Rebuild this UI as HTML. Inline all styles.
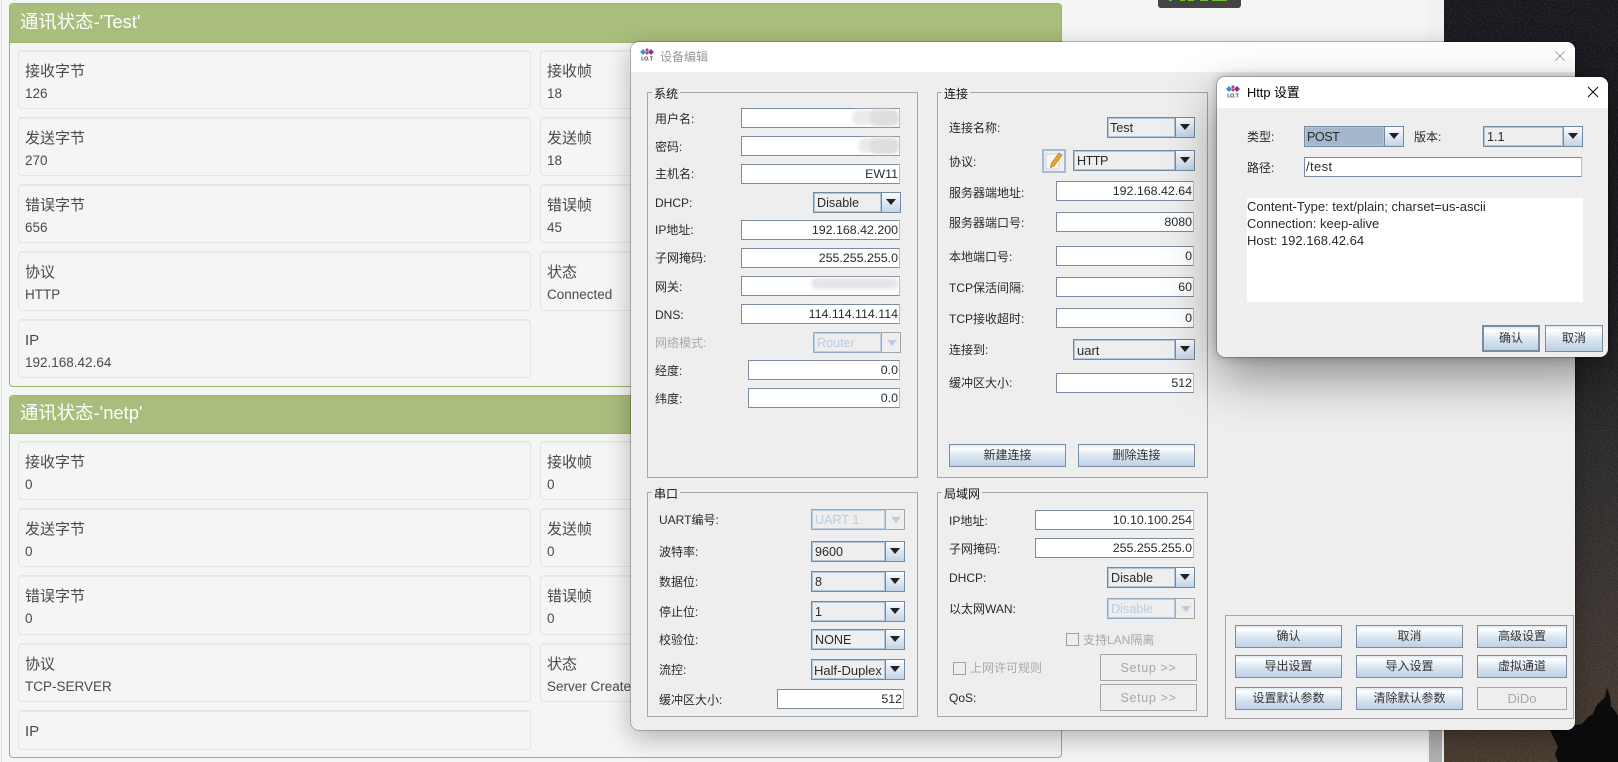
<!DOCTYPE html>
<html lang="zh-CN">
<head>
<meta charset="utf-8">
<title>设备编辑</title>
<style>
html,body{margin:0;padding:0;background:#f4f6f6}
#r{position:relative;width:1618px;height:762px;overflow:hidden;background:#f4f6f6;font-family:"Liberation Sans","Noto Sans CJK SC",sans-serif;color:#222}
#r div,#r span,#r svg{position:absolute}
.panel{box-sizing:border-box;left:9px;width:1053px;border:1px solid #9db36e;border-radius:4px;background:#f4f6f6}
.ph{left:0;right:0;top:0;background:#a9bd7d;border-bottom:1px solid #9db36e;border-radius:3px 3px 0 0}
.pt{left:10px;font-size:18.4px;line-height:24px;color:#fff;white-space:nowrap}
.card{box-sizing:border-box;height:59px;left:18px;width:513px;background:#f5f5f5;border:1px solid #e4e4e4;border-radius:4px;box-shadow:inset 0 1px 1px rgba(0,0,0,.05)}
.c2{left:540px}
.l{left:6px;top:11px;font-size:15px;line-height:20px;color:#4a4a4a;white-space:nowrap}
.v{left:6px;top:34px;font-size:13.5px;line-height:18px;color:#4a4a4a;white-space:nowrap}
.dlg{box-sizing:border-box;background:#eee;border-radius:8px;box-shadow:0 0 0 1px rgba(0,0,0,.22),0 8px 26px rgba(0,0,0,.28)}
.tb{left:0;right:0;top:0;background:#fff;border-radius:8px 8px 0 0}
.g{box-sizing:border-box;border:1px solid #a6a6a6}
.t{font-size:12px;line-height:16px;white-space:nowrap;color:#2a2a2a}
.lg{background:#eee;padding:0 2px;font-size:12px;line-height:14px;white-space:nowrap;color:#111}
.dis{color:#a8a8a8}
.i{box-sizing:border-box;height:20px;background:#fff;border:1px solid #7b8b9c;border-right:1px solid #b5bfc9;font-size:12.4px;line-height:18px;text-align:right;padding-right:1px;color:#2a2a2a;white-space:nowrap;overflow:hidden}
.c{box-sizing:border-box;height:21px;border:1px solid #7389a0;background:#eee}
.cv{box-sizing:border-box;left:0;top:0;bottom:0;right:19px;border:1px solid #b0c6dc;padding-left:2px;font-size:12.6px;line-height:19px;color:#2a2a2a;white-space:nowrap;overflow:hidden}
.cb{box-sizing:border-box;right:0;top:0;bottom:0;width:19px;border-left:1px solid #7389a0;background:linear-gradient(#fbfcfe,#c2d4e6)}
.cb:after{content:"";position:absolute;left:4px;top:6px;border-left:5px solid transparent;border-right:5px solid transparent;border-top:6px solid #222}
.c.d{border-color:#8fa9c3}
.c.d .cv{border-color:#bcd0e4;color:#b9cde2}
.c.d .cb{border:1px solid #a6a6a6;border-left-color:#a6a6a6;background:#eee;top:-1px;bottom:-1px;right:-1px;width:20px}
.c.d .cb:after{border-top-color:#b9cde2;left:5px;top:7px}
.bt{box-sizing:border-box;height:23px;border:1px solid #7a8c9e;background:linear-gradient(#dde8f2 0,#fff 16%,#dce7f1 50%,#bdd1e5 100%);font-size:12px;line-height:21px;text-align:center;color:#333;white-space:nowrap}
.bt.off{background:#eee;border-color:#a6a6a6;color:#a8a8a8}
.cbx{box-sizing:border-box;width:13px;height:13px;border:1px solid #98a2ac;background:#eee}
.blur{background:#dedede;filter:blur(1.5px);border-radius:7px}
</style>
</head>
<body>
<div id="r">

<!-- wallpaper -->
<div style="left:1444px;top:0;width:174px;height:762px;background:linear-gradient(#15171d 0,#1c1d21 35%,#2b2a2a 60%,#3a3330 80%,#46392c 100%)"></div>
<svg style="left:1444px;top:0" width="174" height="762" viewBox="0 0 174 762">
<filter id="nz"><feTurbulence type="fractalNoise" baseFrequency=".7" numOctaves="2" seed="4"/><feColorMatrix values="0 0 0 0 1 0 0 0 0 1 0 0 0 0 1 1.4 0 0 0 -.55"/></filter>
<rect width="174" height="762" filter="url(#nz)" opacity=".16"/>
<path fill="#0c0c0c" d="M163 688l3 8 1 10 5 6 2 4v46h-60l-3-8 3-7-8-17 6-2 26-4 6-7 5-3 3-8 4-4 5-5z"/>
</svg>

<!-- scrollbar -->
<div style="left:1427px;top:0;width:17px;height:762px;background:#f1f1f1"></div>
<div style="left:1429px;top:300px;width:13px;height:462px;background:#b0b0b0"></div>

<!-- top tooltip -->
<div style="left:1158px;top:-4px;width:83px;height:12px;background:#444;border-radius:3px"></div>
<div style="left:1169px;top:0;width:3px;height:1px;background:#6ec22a"></div>
<div style="left:1180px;top:0;width:5px;height:1px;background:#6ec22a"></div>
<div style="left:1188px;top:0;width:6px;height:1px;background:#6ec22a"></div>
<div style="left:1200px;top:0;width:8px;height:1px;background:#6ec22a"></div>
<div style="left:1212px;top:0;width:15px;height:1px;background:#6ec22a"></div>

<div style="left:1px;top:0;width:1px;height:762px;background:#dcdcdc"></div>

<!-- panel 1 -->
<div class="panel" style="top:3px;height:384px"><div class="ph" style="height:38px"><div class="pt" style="top:6px">通讯状态-'Test'</div></div></div>
<div class="card" style="top:50px"><div class="l">接收字节</div><div class="v">126</div></div>
<div class="card c2" style="top:50px"><div class="l">接收帧</div><div class="v">18</div></div>
<div class="card" style="top:117px"><div class="l">发送字节</div><div class="v">270</div></div>
<div class="card c2" style="top:117px"><div class="l">发送帧</div><div class="v">18</div></div>
<div class="card" style="top:184px"><div class="l">错误字节</div><div class="v">656</div></div>
<div class="card c2" style="top:184px"><div class="l">错误帧</div><div class="v">45</div></div>
<div class="card" style="top:251px;height:60px"><div class="l">协议</div><div class="v">HTTP</div></div>
<div class="card c2" style="top:251px;height:60px"><div class="l">状态</div><div class="v">Connected</div></div>
<div class="card" style="top:319px"><div class="l">IP</div><div class="v">192.168.42.64</div></div>

<!-- panel 2 -->
<div class="panel" style="top:395px;height:363px"><div class="ph" style="height:37px"><div class="pt" style="top:5px">通讯状态-'netp'</div></div></div>
<div class="card" style="top:441px"><div class="l">接收字节</div><div class="v">0</div></div>
<div class="card c2" style="top:441px"><div class="l">接收帧</div><div class="v">0</div></div>
<div class="card" style="top:508px"><div class="l">发送字节</div><div class="v">0</div></div>
<div class="card c2" style="top:508px"><div class="l">发送帧</div><div class="v">0</div></div>
<div class="card" style="top:575px;height:60px"><div class="l">错误字节</div><div class="v">0</div></div>
<div class="card c2" style="top:575px;height:60px"><div class="l">错误帧</div><div class="v">0</div></div>
<div class="card" style="top:643px"><div class="l">协议</div><div class="v">TCP-SERVER</div></div>
<div class="card c2" style="top:643px"><div class="l">状态</div><div class="v">Server Created</div></div>
<div class="card" style="top:710px;height:40px"><div class="l">IP</div></div>

<!-- main dialog -->
<div class="dlg" style="left:631px;top:42px;width:944px;height:688px"><div class="tb" style="height:30px"></div></div>
<svg style="left:640px;top:48px" width="14" height="14" viewBox="0 0 14 14"><path d="M0 4l3-3 3 3-3 3z" fill="#3a8fd8"/><path d="M8 4l3-3 3 3-3 3z" fill="#7a3a9a"/><path d="M5 2l2-2 2 2-2 2z" fill="#a04a9a"/><path d="M5 5l2-2 2 2-2 2z" fill="#e0434b"/><text x="7" y="12.5" font-size="5.2" font-weight="bold" text-anchor="middle" font-family="Liberation Sans" fill="#333">I.O.T</text></svg>
<div class="t" style="left:660px;top:49px;color:#999">设备编辑</div>
<svg style="left:1554px;top:50px" width="12" height="12" viewBox="0 0 12 12"><path d="M1 1l10 10M11 1L1 11" stroke="#aaa" stroke-width="1" fill="none"/></svg>

<!-- 系统 -->
<div class="g" style="left:647px;top:92px;width:271px;height:386px"></div>
<div class="lg" style="left:652px;top:87px">系统</div>
<div class="t" style="left:655px;top:111px">用户名:</div>
<div class="i" style="left:741px;top:108px;width:159px"></div>
<div class="blur" style="left:852px;top:110px;width:46px;height:15px;background:#ebebeb"></div>
<div class="blur" style="left:870px;top:110px;width:29px;height:16px"></div>
<div class="t" style="left:655px;top:139px">密码:</div>
<div class="i" style="left:741px;top:136px;width:159px"></div>
<div class="blur" style="left:858px;top:138px;width:40px;height:15px;background:#ebebeb"></div>
<div class="blur" style="left:870px;top:138px;width:29px;height:16px"></div>
<div class="t" style="left:655px;top:166px">主机名:</div>
<div class="i" style="left:741px;top:164px;width:159px">EW11</div>
<div class="t" style="left:655px;top:195px">DHCP:</div>
<div class="c" style="left:813px;top:192px;width:88px"><div class="cv">Disable</div><div class="cb"></div></div>
<div class="t" style="left:655px;top:222px">IP地址:</div>
<div class="i" style="left:741px;top:220px;width:159px">192.168.42.200</div>
<div class="t" style="left:655px;top:250px">子网掩码:</div>
<div class="i" style="left:741px;top:248px;width:159px">255.255.255.0</div>
<div class="t" style="left:655px;top:279px">网关:</div>
<div class="i" style="left:741px;top:276px;width:159px"></div>
<div class="blur" style="left:811px;top:278px;width:87px;height:11px;background:#e6e6e6"></div>
<div class="t" style="left:655px;top:307px">DNS:</div>
<div class="i" style="left:741px;top:304px;width:159px">114.114.114.114</div>
<div class="t dis" style="left:655px;top:335px">网络模式:</div>
<div class="c d" style="left:813px;top:332px;width:88px"><div class="cv">Router</div><div class="cb"></div></div>
<div class="t" style="left:655px;top:363px">经度:</div>
<div class="i" style="left:748px;top:360px;width:152px">0.0</div>
<div class="t" style="left:655px;top:391px">纬度:</div>
<div class="i" style="left:748px;top:388px;width:152px">0.0</div>

<!-- 串口 -->
<div class="g" style="left:647px;top:492px;width:271px;height:225px"></div>
<div class="lg" style="left:652px;top:487px">串口</div>
<div class="t" style="left:659px;top:512px">UART编号:</div>
<div class="c d" style="left:811px;top:509px;width:94px"><div class="cv">UART 1</div><div class="cb"></div></div>
<div class="t" style="left:659px;top:544px">波特率:</div>
<div class="c" style="left:811px;top:541px;width:94px"><div class="cv">9600</div><div class="cb"></div></div>
<div class="t" style="left:659px;top:574px">数据位:</div>
<div class="c" style="left:811px;top:571px;width:94px"><div class="cv">8</div><div class="cb"></div></div>
<div class="t" style="left:659px;top:604px">停止位:</div>
<div class="c" style="left:811px;top:601px;width:94px"><div class="cv">1</div><div class="cb"></div></div>
<div class="t" style="left:659px;top:632px">校验位:</div>
<div class="c" style="left:811px;top:629px;width:94px"><div class="cv">NONE</div><div class="cb"></div></div>
<div class="t" style="left:659px;top:662px">流控:</div>
<div class="c" style="left:811px;top:659px;width:94px"><div class="cv" style="font-size:13px;padding-left:1px">Half-Duplex</div><div class="cb"></div></div>
<div class="t" style="left:659px;top:692px">缓冲区大小:</div>
<div class="i" style="left:777px;top:689px;width:127px">512</div>

<!-- 连接 -->
<div class="g" style="left:937px;top:92px;width:271px;height:386px"></div>
<div class="lg" style="left:942px;top:87px">连接</div>
<div class="t" style="left:949px;top:120px">连接名称:</div>
<div class="c" style="left:1107px;top:117px;width:88px"><div class="cv" style="padding-left:1px">Test</div><div class="cb"></div></div>
<div class="t" style="left:949px;top:154px">协议:</div>
<div style="left:1042px;top:149px;width:24px;height:24px;box-sizing:border-box;border:2px solid #a3bbd3;background:#eee"></div>
<svg style="left:1044px;top:151px" width="20" height="20" viewBox="0 0 20 20"><path d="M2 3h13v15H2z" fill="#f8f8f8" stroke="#c8c8c8" stroke-width=".8"/><path d="M7 13L15 2l3 2-8 11-3.5 1.5z" fill="#e8a92e" stroke="#b57c14" stroke-width=".7"/></svg>
<div class="c" style="left:1073px;top:150px;width:122px"><div class="cv" style="letter-spacing:-.5px">HTTP</div><div class="cb"></div></div>
<div class="t" style="left:949px;top:185px">服务器端地址:</div>
<div class="i" style="left:1056px;top:181px;width:138px">192.168.42.64</div>
<div class="t" style="left:949px;top:215px">服务器端口号:</div>
<div class="i" style="left:1056px;top:212px;width:138px">8080</div>
<div class="t" style="left:949px;top:249px">本地端口号:</div>
<div class="i" style="left:1056px;top:246px;width:138px">0</div>
<div class="t" style="left:949px;top:280px">TCP保活间隔:</div>
<div class="i" style="left:1056px;top:277px;width:138px">60</div>
<div class="t" style="left:949px;top:311px">TCP接收超时:</div>
<div class="i" style="left:1056px;top:308px;width:138px">0</div>
<div class="t" style="left:949px;top:342px">连接到:</div>
<div class="c" style="left:1073px;top:339px;width:122px"><div class="cv" style="font-size:13px">uart</div><div class="cb"></div></div>
<div class="t" style="left:949px;top:375px">缓冲区大小:</div>
<div class="i" style="left:1056px;top:373px;width:138px">512</div>
<div class="bt" style="left:949px;top:444px;width:117px">新建连接</div>
<div class="bt" style="left:1078px;top:444px;width:117px">删除连接</div>

<!-- 局域网 -->
<div class="g" style="left:937px;top:492px;width:271px;height:225px"></div>
<div class="lg" style="left:942px;top:487px">局域网</div>
<div class="t" style="left:949px;top:513px">IP地址:</div>
<div class="i" style="left:1035px;top:510px;width:159px">10.10.100.254</div>
<div class="t" style="left:949px;top:541px">子网掩码:</div>
<div class="i" style="left:1035px;top:538px;width:159px">255.255.255.0</div>
<div class="t" style="left:949px;top:570px">DHCP:</div>
<div class="c" style="left:1107px;top:567px;width:88px"><div class="cv">Disable</div><div class="cb"></div></div>
<div class="t" style="left:949px;top:601px">以太网WAN:</div>
<div class="c d" style="left:1107px;top:598px;width:88px"><div class="cv">Disable</div><div class="cb"></div></div>
<div class="cbx" style="left:1066px;top:633px"></div>
<div class="t dis" style="left:1083px;top:632px">支持LAN隔离</div>
<div class="cbx" style="left:953px;top:662px"></div>
<div class="t dis" style="left:970px;top:660px">上网许可规则</div>
<div class="bt off" style="left:1100px;top:654px;width:97px;height:27px;line-height:26px;font-size:12.6px;letter-spacing:.6px">Setup &gt;&gt;</div>
<div class="t" style="left:949px;top:690px">QoS:</div>
<div class="bt off" style="left:1100px;top:684px;width:97px;height:27px;line-height:26px;font-size:12.6px;letter-spacing:.6px">Setup &gt;&gt;</div>

<!-- buttons group -->
<div class="g" style="left:1225px;top:615px;width:349px;height:104px"></div>
<div class="bt" style="left:1235px;top:625px;width:107px">确认</div>
<div class="bt" style="left:1356px;top:625px;width:107px">取消</div>
<div class="bt" style="left:1477px;top:625px;width:90px">高级设置</div>
<div class="bt" style="left:1235px;top:655px;width:107px">导出设置</div>
<div class="bt" style="left:1356px;top:655px;width:107px">导入设置</div>
<div class="bt" style="left:1477px;top:655px;width:90px">虚拟通道</div>
<div class="bt" style="left:1235px;top:687px;width:107px">设置默认参数</div>
<div class="bt" style="left:1356px;top:687px;width:107px">清除默认参数</div>
<div class="bt off" style="left:1477px;top:687px;width:90px;font-size:13px">DiDo</div>

<!-- http dialog -->
<div class="dlg" style="left:1217px;top:77px;width:391px;height:280px;box-shadow:0 0 0 1px rgba(0,0,0,.2),0 0 10px rgba(0,0,0,.25),0 20px 50px rgba(0,0,0,.42)"><div class="tb" style="height:31px"></div></div>
<svg style="left:1226px;top:85px" width="14" height="14" viewBox="0 0 14 14"><path d="M0 4l3-3 3 3-3 3z" fill="#3a8fd8"/><path d="M8 4l3-3 3 3-3 3z" fill="#7a3a9a"/><path d="M5 2l2-2 2 2-2 2z" fill="#a04a9a"/><path d="M5 5l2-2 2 2-2 2z" fill="#e0434b"/><text x="7" y="12.5" font-size="5.2" font-weight="bold" text-anchor="middle" font-family="Liberation Sans" fill="#333">I.O.T</text></svg>
<div class="t" style="left:1247px;top:85px;color:#000;font-size:12.8px">Http 设置</div>
<svg style="left:1587px;top:86px" width="12" height="12" viewBox="0 0 12 12"><path d="M1 1l10 10M11 1L1 11" stroke="#111" stroke-width="1.1" fill="none"/></svg>
<div class="t" style="left:1247px;top:129px">类型:</div>
<div class="c" style="left:1304px;top:126px;width:100px"><div class="cv" style="background:#a3b8cc;padding-left:1px;letter-spacing:-.5px">POST</div><div class="cb"></div></div>
<div class="t" style="left:1414px;top:129px">版本:</div>
<div class="c" style="left:1483px;top:126px;width:100px"><div class="cv">1.1</div><div class="cb"></div></div>
<div class="t" style="left:1247px;top:160px">路径:</div>
<div class="i" style="left:1304px;top:157px;width:278px;text-align:left;padding-left:1px;font-size:13px;letter-spacing:.4px">/test</div>
<div style="left:1247px;top:198px;width:336px;height:104px;background:#fff"></div>
<div class="t" style="left:1247px;top:199px;font-size:13px">Content-Type: text/plain; charset=us-ascii</div>
<div class="t" style="left:1247px;top:216px;font-size:13px">Connection: keep-alive</div>
<div class="t" style="left:1247px;top:233px;font-size:13px">Host: 192.168.42.64</div>
<div class="bt" style="left:1482px;top:325px;width:58px;height:27px;border-width:2px;line-height:23px">确认</div>
<div class="bt" style="left:1545px;top:325px;width:58px;height:27px;line-height:25px">取消</div>

</div>
</body>
</html>
